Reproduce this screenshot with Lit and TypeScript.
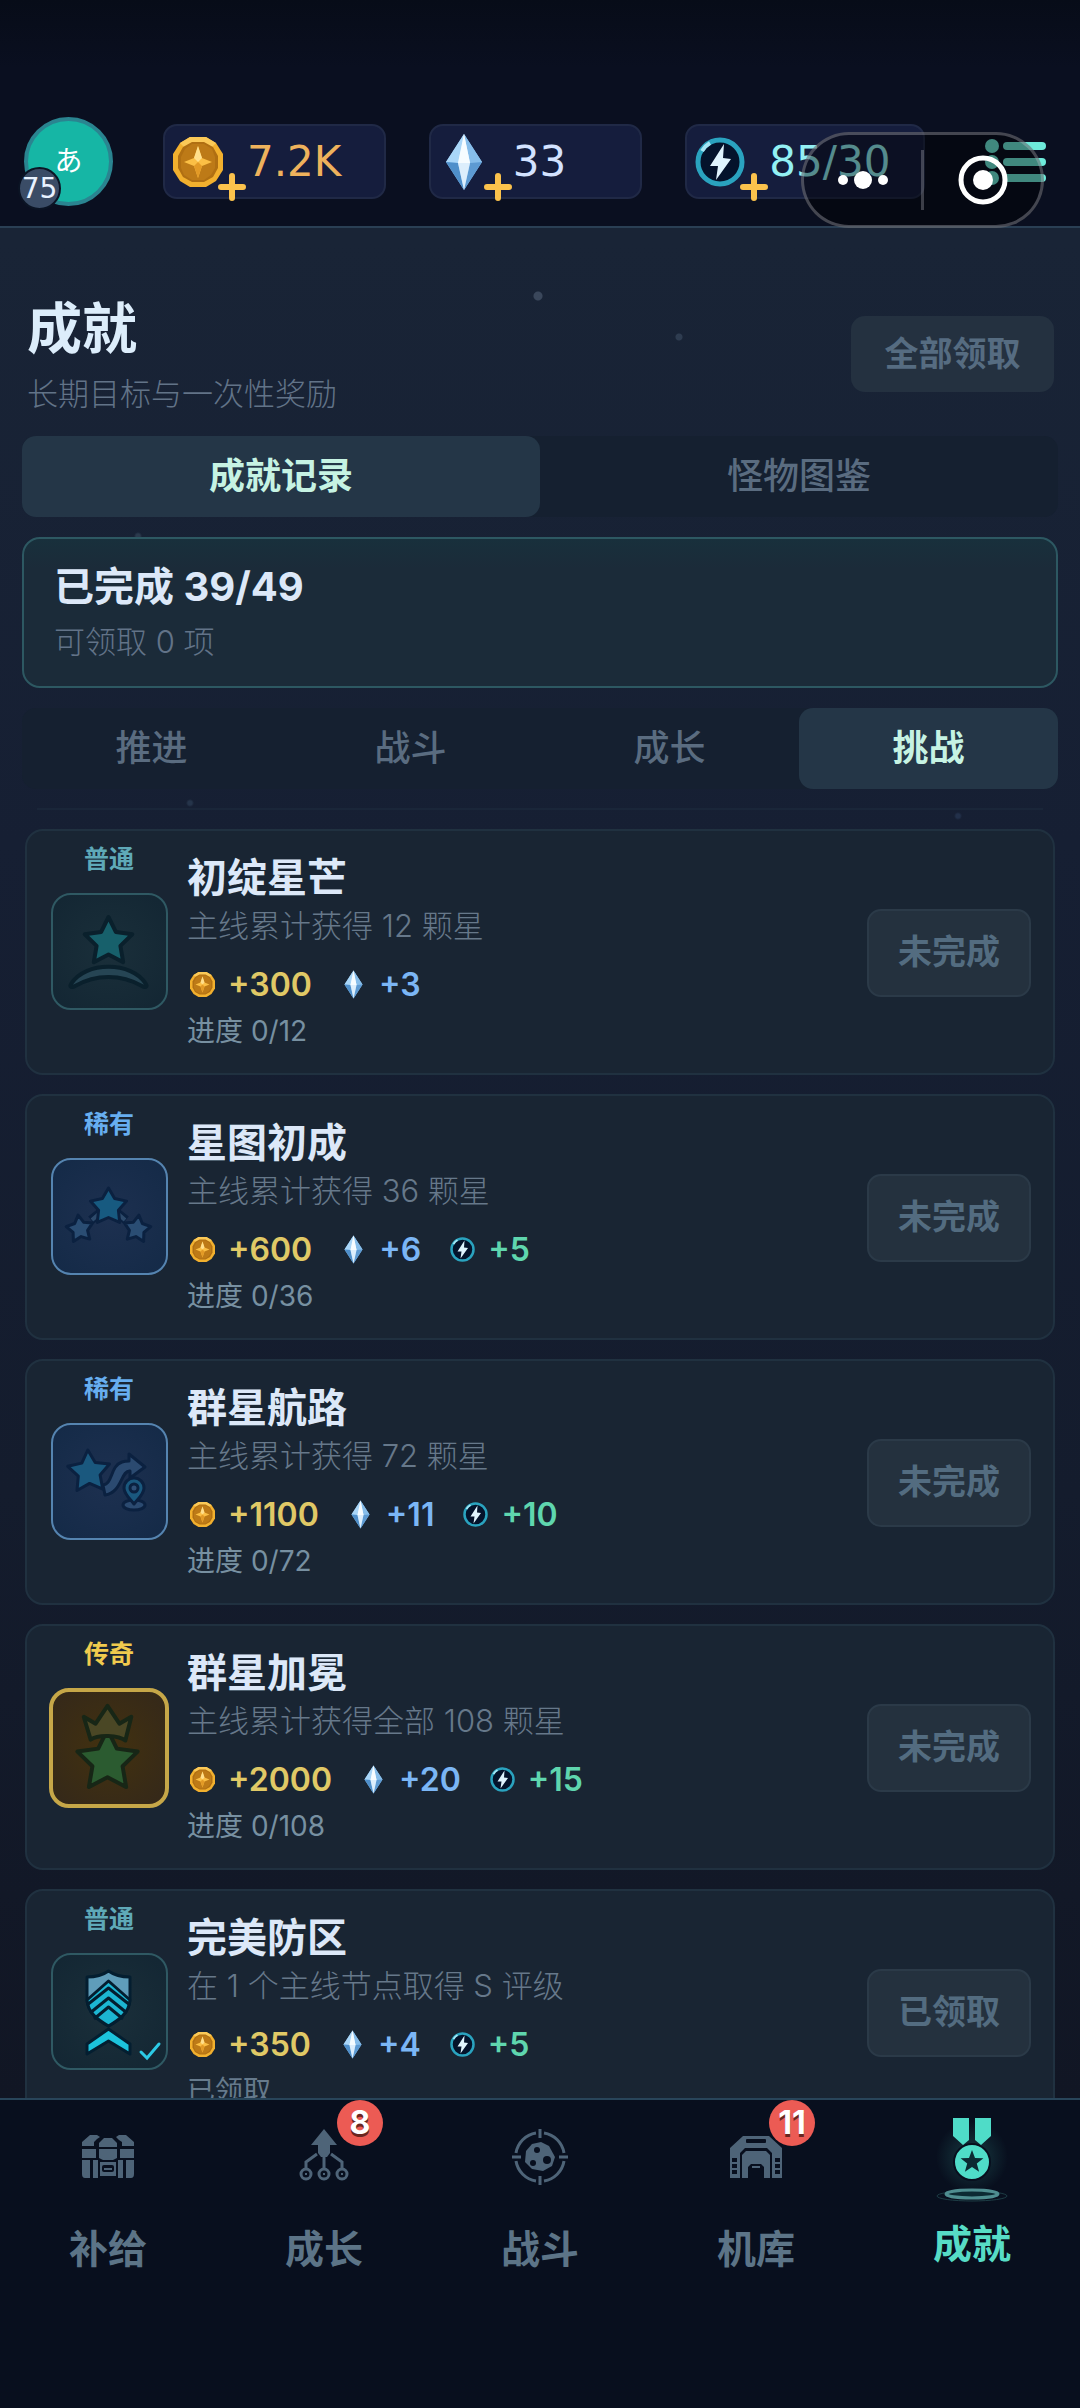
import { LitElement, html, svg, css, nothing } from "lit";
import { customElement, property, state } from "lit/decorators.js";
import { classMap } from "lit/directives/class-map.js";

type Rarity = "common" | "rare" | "legend";

interface Achievement {
  id: string;
  rarity: Rarity;
  title: string;
  desc: string;
  gold: number;
  gem: number;
  energy?: number;
  progress: string;
  claimed?: boolean;
}

const RARITY_LABEL: Record<Rarity, string> = {
  common: "普通",
  rare: "稀有",
  legend: "传奇",
};

const ACHIEVEMENTS: Achievement[] = [
  {
    id: "first-star",
    rarity: "common",
    title: "初绽星芒",
    desc: "主线累计获得 12 颗星",
    gold: 300,
    gem: 3,
    progress: "进度 0/12",
  },
  {
    id: "star-map",
    rarity: "rare",
    title: "星图初成",
    desc: "主线累计获得 36 颗星",
    gold: 600,
    gem: 6,
    energy: 5,
    progress: "进度 0/36",
  },
  {
    id: "star-route",
    rarity: "rare",
    title: "群星航路",
    desc: "主线累计获得 72 颗星",
    gold: 1100,
    gem: 11,
    energy: 10,
    progress: "进度 0/72",
  },
  {
    id: "star-crown",
    rarity: "legend",
    title: "群星加冕",
    desc: "主线累计获得全部 108 颗星",
    gold: 2000,
    gem: 20,
    energy: 15,
    progress: "进度 0/108",
  },
  {
    id: "perfect-defense",
    rarity: "common",
    title: "完美防区",
    desc: "在 1 个主线节点取得 S 评级",
    gold: 350,
    gem: 4,
    energy: 5,
    progress: "已领取",
    claimed: true,
  },
];

// five-pointed star, as a points list
function star(cx: number, cy: number, r: number, inner = 0.5, turn = 0) {
  const pts: string[] = [];
  for (let i = 0; i < 10; i++) {
    const a = ((i * 36 - 90 + turn) * Math.PI) / 180;
    const d = i % 2 ? r * inner : r;
    pts.push(`${(cx + d * Math.cos(a)).toFixed(1)},${(cy + d * Math.sin(a)).toFixed(1)}`);
  }
  return pts.join(" ");
}

const coinIcon = html`<svg viewBox="0 0 50 50" aria-hidden="true">
  <polygon points="17,0 33,0 43,6 50,17 50,33 43,44 33,50 17,50 7,44 0,33 0,17 7,6" fill="#f2b02e" />
  <polygon points="17,0 33,0 43,6 38,11 31,6 19,6 12,11 7,6" fill="#fbc957" />
  <polygon points="19,5 31,5 40,10 45,19 45,31 40,40 31,45 19,45 10,40 5,31 5,19 10,10" fill="#b06f12" />
  <polygon points="19,7 31,7 39,12 42,20 42,31 38,38 31,43 19,43 11,38 8,31 8,20 12,12" fill="#bd7a17" />
  <polygon points="25,9 29,21 39,25 29,29 25,41 21,29 11,25 21,21" fill="#fbbf45" />
  <polygon points="25,9 29,21 25,25 21,21" fill="#ffdf8c" />
  <polygon points="25,41 21,29 25,25 29,29" fill="#e39a26" />
</svg>`;

const gemIcon = html`<svg viewBox="0 0 50 50" aria-hidden="true">
  <polygon points="25,-3 43,25 25,53 7,25" fill="#8ec4f0" />
  <polygon points="25,-3 7,25 19,26" fill="#a9d6f8" />
  <polygon points="25,-3 43,25 31,26" fill="#86bdea" />
  <polygon points="7,25 19,26 25,53" fill="#4f8fca" />
  <polygon points="43,25 31,26 25,53" fill="#5d9ad2" />
  <polygon points="25,-3 31,26 25,53 19,26" fill="#dceefc" />
  <polygon points="25,-3 31,26 19,26" fill="#f6fcff" />
</svg>`;

const energyIcon = html`<svg viewBox="0 0 50 50" aria-hidden="true">
  <circle cx="25" cy="25" r="22" fill="#04132b" stroke="#2aa3bf" stroke-width="5" />
  <path d="M7 14A22 22 0 0 1 15 6" fill="none" stroke="#a5e6f5" stroke-width="4" />
  <polygon points="29,7 15,29 23,29 21,43 36,22 28,21" fill="#dff4fd" />
</svg>`;

const achievementArt: Record<string, unknown> = {
  "first-star": svg`
    <g fill="#17606b" stroke="#0a202c" stroke-width="4" stroke-linejoin="round">
      <path d="M18 89C32 66 79 66 93 89C95 92 92 93 89 91C68 79 43 79 22 91C19 93 16 92 18 89Z" fill="#264554" />
      <polygon points=${star(55.5, 47, 25, 0.5)} />
    </g>`,
  "star-map": svg`
    <g stroke="#0b2140" stroke-width="3" stroke-linejoin="round">
      <path d="M38 60L48 52M73 60L63 52" stroke-width="9" />
      <path d="M39 60L47 53M72 60L64 53" stroke="#2d4a6b" stroke-width="4" />
      <polygon points=${star(55.5, 47, 19, 0.55)} fill="#175a80" />
      <polygon points=${star(27, 69, 14, 0.55, -8)} fill="#2a4d73" />
      <polygon points=${star(84, 69, 14, 0.55, 8)} fill="#2a4d73" />
    </g>`,
  "star-route": svg`
    <g stroke="#0b2140" stroke-width="3" stroke-linejoin="round">
      <path d="M50 60C60 59 57 41 69 37C72 36 74 36 76 36L76 29L92 42L77 53L77 46C68 45 69 68 52 70Z" fill="#2b4a70" />
      <polygon points=${star(36, 47, 22, 0.52, -3)} fill="#1a587e" />
      <ellipse cx="81" cy="80" rx="11" ry="5" fill="#2b4a70" />
      <path d="M81 79C77 74 71 69 71 63A10 10 0 0 1 91 63C91 69 85 74 81 79Z" fill="#1a587e" />
      <circle cx="81" cy="63" r="4" fill="#2f4f76" />
    </g>`,
  "star-crown": svg`
    <g stroke="#172616" stroke-width="4" stroke-linejoin="round">
      <polygon points=${star(55, 70, 32, 0.5)} fill="#2b5b30" />
      <path d="M31 25L43 32L55 14L67 32L79 25L73 49C66 43 45 43 38 48Z" fill="#4a4725" />
    </g>`,
  "perfect-defense": svg`
    <g stroke="#041e30" stroke-width="3" stroke-linejoin="round">
      <path d="M55.5 16C61 20 69 22 77 22L77 43C77 57 66 65 55.5 71C45 65 34 57 34 43L34 22C42 22 50 20 55.5 16Z" fill="#5f9dba" />
      <path d="M55.5 26L77 45C76 58 66 65 55.5 71C45 65 35 58 34 45Z" fill="#1cb6d3" />
      <path d="M34 50L55.5 33L77 50M37 58L55.5 43L74 58M41 64L55.5 52L70 64" fill="none" />
      <path d="M55.5 74L77 89L77 99L55.5 86L34 99L34 89Z" fill="#1cc3dc" />
    </g>
    <path d="M88 97L94 103L106 89" fill="none" stroke="#2ccbe6" stroke-width="3" stroke-linecap="round" />`,
};

const navArt: Record<string, unknown> = {
  supply: svg`
    <g fill="#4e6478" transform="translate(10 15)">
      <path d="M4 19V15L12 8H19L22 10L19 12L16 15V19ZM56 19V15L48 8H41L38 10L41 13L44 15V19Z" />
      <path d="M21 20V16L26 11H34L39 16V20Z" />
      <path d="M4 22H18V31H4ZM42 22H56V31H42ZM21 22H39V31L35 33H25L21 31Z" />
      <path d="M4 33H12V51H7Q4 51 4 47ZM15 33H20V51H15ZM40 33H45V51H40ZM48 33H56V47Q56 51 53 51H48Z" />
      <path d="M22 35H38V49H22Z" />
      <rect x="24" y="38" width="12" height="7" rx="2" fill="#080f1e" />
      <path d="M26 41H34V43H26Z" />
    </g>`,
  growth: svg`
    <g fill="#4e6478" transform="translate(10 15)">
      <path d="M30 2L43 18H36V26L33 30H27L24 26V18H17Z" />
      <g fill="none" stroke="#4e6478" stroke-width="3">
        <path d="M30 28V42M23 27L12 35V42M37 27L48 35V42" />
        <circle cx="12" cy="47" r="5" />
        <circle cx="30" cy="47" r="5" />
        <circle cx="48" cy="47" r="5" />
      </g>
      <path d="M11 46h2v2h-2zM29 46h2v2h-2zM47 46h2v2h-2z" />
    </g>`,
  battle: svg`
    <g fill="none" stroke="#4e6478" stroke-width="3" transform="translate(10 15)">
      <path d="M34 6A24 24 0 0 1 54 26M54 34A24 24 0 0 1 34 54M26 54A24 24 0 0 1 6 34M6 26A24 24 0 0 1 26 6" />
      <path d="M30 2V11M30 49V58M2 30H11M49 30H58" />
      <path d="M22 17L31 15L39 19L45 30L42 39L33 44L22 42L15 35L16 24Z" fill="#4e6478" stroke="none" />
      <g fill="#080f1e" stroke="none">
        <circle cx="27" cy="23" r="3" />
        <circle cx="23" cy="36" r="3" />
        <circle cx="37" cy="33" r="4" />
      </g>
    </g>`,
  hangar: svg`
    <g fill="#4e6478" transform="translate(10 15)">
      <path d="M4 51V21L17 9H43L56 21V51H46V26L41 21H19L14 26V51Z" />
      <path d="M16 51V28L20 24H40L44 28V51H38V40L35 37H25L22 40V51Z" />
      <rect x="26" y="39" width="8" height="2" />
      <g fill="#080f1e">
        <rect x="20" y="12" width="20" height="4" rx="1" />
        <path d="M6 31h5v4h-5zM6 37h5v4h-5zM6 43h5v4h-5zM49 31h5v4h-5zM49 37h5v4h-5zM49 43h5v4h-5z" />
      </g>
    </g>`,
  achievement: svg`
    <defs>
      <radialGradient id="halo">
        <stop offset="0" stop-color="#4fdcc8" stop-opacity="0.22" />
        <stop offset="1" stop-color="#4fdcc8" stop-opacity="0" />
      </radialGradient>
    </defs>
    <circle cx="40" cy="45" r="36" fill="url(#halo)" />
    <g fill="#4fdcc8">
      <path d="M21 6H37V28L31 33L21 24ZM43 6H59V24L49 33L43 28Z" />
      <circle cx="40" cy="50" r="18" stroke="#080f1e" stroke-width="2" />
    </g>
    <polygon points=${star(40, 50, 12, 0.42)} fill="#0c2a33" />
    <ellipse cx="40" cy="84" rx="35" ry="5" fill="none" stroke="#1d3d45" stroke-width="1" />
    <ellipse cx="40" cy="82" rx="26" ry="4" fill="#0c2a33" stroke="#4f8d90" stroke-width="3" />`,
};

const NAV = [
  { id: "supply", label: "补给" },
  { id: "growth", label: "成长", badge: 8 },
  { id: "battle", label: "战斗" },
  { id: "hangar", label: "机库", badge: 11 },
  { id: "achievement", label: "成就" },
];

@customElement("achievement-card")
export class AchievementCard extends LitElement {
  @property({ attribute: false }) item!: Achievement;

  static styles = css`
    :host {
      display: flex;
      flex: none;
      box-sizing: border-box;
      height: 246px;
      padding: 14px 22px 0;
      border: 2px solid #203140;
      border-radius: 18px;
      background: #192533;
    }
    .side {
      flex: none;
      width: 120px;
      display: flex;
      flex-direction: column;
      align-items: center;
      gap: 20px;
    }
    .rarity {
      font-size: 25px;
      line-height: 28px;
      font-weight: 700;
      color: #5fa9b8;
    }
    .rare .rarity {
      color: #67aef0;
    }
    .legend .rarity {
      color: #f0cb4e;
    }
    .icon {
      box-sizing: border-box;
      width: 117px;
      height: 117px;
      border: 2px solid #2f5963;
      border-radius: 20px;
      background: radial-gradient(#1a2f3a, #132633);
    }
    .rare .icon {
      border-color: #5584b0;
      background: radial-gradient(#1d3050, #142a47);
    }
    .legend .icon {
      width: 120px;
      height: 120px;
      border: 4px solid #c6a748;
      background: radial-gradient(#42310f, #34281a);
    }
    .icon svg {
      display: block;
      width: 100%;
      height: 100%;
    }
    .info {
      flex: 1;
      min-width: 0;
      padding: 7px 0 0 18px;
    }
    h2 {
      margin: 0;
      font-size: 40px;
      line-height: 52px;
      font-weight: 700;
      color: #dce8f8;
    }
    .info p {
      margin: 0;
    }
    .desc {
      font-size: 31px;
      line-height: 44px;
      font-weight: 300;
      color: #66788a;
    }
    .rewards {
      display: flex;
      align-items: center;
      gap: 26px;
      margin: 16px 0 8px;
      height: 40px;
      padding: 0;
      list-style: none;
      font-size: 32px;
      font-weight: 600;
    }
    .rewards li {
      display: flex;
      align-items: center;
      gap: 10px;
    }
    .rewards svg {
      width: 25px;
      height: 25px;
      padding: 0 3px;
      overflow: visible;
    }
    .gold {
      color: #e0c966;
    }
    .gem {
      color: #7bb6f5;
    }
    .energy {
      color: #5fd6ae;
    }
    .progress {
      font-size: 28px;
      line-height: 38px;
      color: #7790a1;
    }
    .claimed {
      color: #667a8c;
    }
    button {
      flex: none;
      align-self: flex-start;
      margin-top: 64px;
      width: 164px;
      height: 88px;
      padding: 0 0 8px;
      border: 2px solid #2b3a48;
      border-radius: 14px;
      background: #24313e;
      color: #536c80;
      font: inherit;
      font-size: 34px;
      font-weight: 700;
    }
  `;

  render() {
    const { item } = this;
    return html`
      <div class="side ${item.rarity}">
        <span class="rarity">${RARITY_LABEL[item.rarity]}</span>
        <div class="icon">
          <svg viewBox="0 0 113 113" aria-hidden="true">${achievementArt[item.id]}</svg>
        </div>
      </div>
      <div class="info">
        <h2>${item.title}</h2>
        <p class="desc">${item.desc}</p>
        <ul class="rewards">
          <li class="gold">${coinIcon}<span>+${item.gold}</span></li>
          <li class="gem">${gemIcon}<span>+${item.gem}</span></li>
          ${item.energy
            ? html`<li class="energy">${energyIcon}<span>+${item.energy}</span></li>`
            : nothing}
        </ul>
        <p class="progress ${item.claimed ? "claimed" : ""}">${item.progress}</p>
      </div>
      <button type="button" disabled>${item.claimed ? "已领取" : "未完成"}</button>
    `;
  }
}

@customElement("app-root")
export class AppRoot extends LitElement {
  @state() private view = "成就记录";
  @state() private category = "挑战";

  static styles = css`
    :host {
      display: flex;
      flex-direction: column;
      height: 100vh;
      overflow: hidden;
      font-family: Inter, "Noto Sans CJK SC", sans-serif;
      color: #dce8f8;
      background:
        radial-gradient(circle at 538px 296px, #3a475b 4px, transparent 5px),
        radial-gradient(circle at 679px 337px, #2e3c50 3px, transparent 4px),
        radial-gradient(circle at 138px 536px, #2b3a4d 2px, transparent 4px),
        radial-gradient(circle at 190px 803px, #25344a 2px, transparent 4px),
        radial-gradient(circle at 958px 816px, #22304a 2px, transparent 4px),
        linear-gradient(#192436 10%, #161f33 35%, #141c2d 62%, #111624 87%);
    }
    button {
      font: inherit;
      border: 0;
    }

    /* top bar */
    header {
      display: grid;
      grid-template-columns: 89px 1fr 62px;
      column-gap: 50px;
      align-items: center;
      padding: 117px 33px 20px 24px;
      border-bottom: 2px solid #2a3f54;
      background: linear-gradient(#070c18, #0a0f20 30%);
    }
    .avatar {
      position: relative;
      box-sizing: border-box;
      width: 89px;
      height: 89px;
      padding: 0 0 6px;
      border: 4px solid #2a8490;
      border-radius: 50%;
      background: #16b6a5;
      color: #fff;
      font-family: "Noto Sans CJK JP", sans-serif;
      font-size: 28px;
    }
    .level {
      position: absolute;
      left: -10px;
      bottom: -8px;
      box-sizing: border-box;
      width: 43px;
      height: 43px;
      border: 2px solid #0b1424;
      border-radius: 50%;
      background: #3a4c66;
      color: #e8f2ff;
      font-family: "DejaVu Sans", sans-serif;
      line-height: 39px;
      display: flex;
      justify-content: center;
    }
    .wallet {
      display: grid;
      grid-template-columns: 223fr 214fr 240fr;
      column-gap: 43px;
      margin-right: 10px;
    }
    .chip {
      display: flex;
      align-items: center;
      gap: 24px;
      box-sizing: border-box;
      height: 75px;
      padding: 0 8px;
      border: 2px solid #202946;
      border-radius: 14px;
      background: #151d3d;
      font-family: "DejaVu Sans", sans-serif;
      font-size: 42px;
      white-space: nowrap;
    }
    .chip > .token {
      position: relative;
      flex: none;
      width: 50px;
      height: 50px;
    }
    .token svg {
      display: block;
      overflow: visible;
    }
    .plus {
      position: absolute;
      left: 45px;
      top: 36px;
      width: 28px;
      height: 28px;
      padding: 0;
      background: none;
    }
    .plus svg {
      width: 28px;
      height: 28px;
    }
    .coin {
      color: #eeb25c;
    }
    .gem {
      color: #d3e2ff;
    }
    .energy {
      color: #93f0f3;
    }
    .menu {
      width: 62px;
      height: 48px;
      padding: 0;
      background: none;
    }
    .menu svg {
      display: block;
    }
    .capsule {
      position: absolute;
      top: 132px;
      right: 36px;
      display: flex;
      align-items: center;
      box-sizing: border-box;
      width: 243px;
      height: 96px;
      border: 3px solid rgba(190, 190, 200, 0.34);
      border-radius: 48px;
      background: rgba(0, 0, 0, 0.42);
    }
    .capsule button {
      flex: 1;
      height: 60px;
      padding: 0;
      background: none;
    }
    .capsule button + button {
      border-left: 3px solid rgba(190, 190, 200, 0.3);
    }
    .capsule svg {
      display: block;
      margin: 0 auto;
    }

    /* page */
    main {
      flex: 1;
      min-height: 0;
      display: flex;
      flex-direction: column;
      padding: 64px 22px 0;
    }
    .heading {
      display: flex;
      align-items: center;
      justify-content: space-between;
      padding: 0 4px 0 5px;
    }
    h1,
    .heading p,
    .summary p {
      margin: 0;
    }
    h1 {
      font-size: 55px;
      line-height: 72px;
      font-weight: 700;
      color: #dcedfb;
    }
    .heading p {
      margin-top: 8px;
    }
    .heading p,
    .summary .sub {
      font-size: 31px;
      line-height: 44px;
      font-weight: 300;
      color: #627388;
    }
    .claim-all {
      width: 203px;
      height: 76px;
      padding: 0 0 6px;
      border-radius: 14px;
      background: #243140;
      color: #566c81;
      font-size: 34px;
      font-weight: 700;
    }
    .tabs {
      display: grid;
      grid-auto-flow: column;
      grid-auto-columns: 1fr;
      flex: none;
      margin-top: 20px;
      border-radius: 14px;
      background: #152030;
    }
    .tabs button {
      height: 81px;
      padding: 0 0 8px;
      border-radius: 14px;
      background: none;
      color: #5a6c80;
      font-size: 36px;
      font-weight: 500;
    }
    .tabs .on {
      background: #243647;
      color: #c6f3e3;
      font-weight: 700;
    }
    .summary {
      flex: none;
      box-sizing: border-box;
      margin-top: 20px;
      padding: 20px 30px 22px;
      border: 2px solid #2d5862;
      border-radius: 18px;
      background: linear-gradient(#18303c, #1b2b39 20%);
    }
    .summary .done {
      margin-bottom: 5px;
      font-size: 40px;
      line-height: 56px;
      font-weight: 700;
    }
    .list {
      flex: 1;
      min-height: 0;
      display: flex;
      flex-direction: column;
      gap: 19px;
      margin-top: 19px;
      padding: 0 3px;
      overflow: hidden;
    }
    .list::before {
      content: "";
      flex: none;
      height: 2px;
      margin: 0 12px;
      background: #1a2639;
    }

    /* bottom bar */
    nav {
      flex: none;
      display: grid;
      grid-template-columns: repeat(5, 1fr);
      box-sizing: border-box;
      height: 310px;
      border-top: 2px solid #28455a;
      background: #080f1e;
    }
    nav a {
      position: relative;
      display: flex;
      flex-direction: column;
      align-items: center;
      gap: 19px;
      padding-top: 12px;
      color: #5c7487;
      font-size: 39px;
      line-height: 56px;
      font-weight: 700;
      text-decoration: none;
    }
    nav a.on {
      gap: 14px;
      color: #57dcc6;
    }
    nav svg {
      width: 80px;
      height: 90px;
    }
    .badge {
      position: absolute;
      left: calc(50% + 13px);
      top: 0;
      width: 46px;
      height: 46px;
      border-radius: 50%;
      background: #ec5b54;
      color: #fff;
      font-size: 32px;
      line-height: 46px;
      text-align: center;
      text-shadow: 0 3px 0 #6a2620;
    }
  `;

  private chip(kind: string, icon: unknown, value: string) {
    return html`
      <div class="chip ${kind}">
        <span class="token">
          ${icon}
          <button class="plus" type="button" aria-label="+">
            <svg viewBox="0 0 28 28">
              <path d="M14 3V25M3 14H25" stroke="#fbc24c" stroke-width="6" stroke-linecap="round" />
            </svg>
          </button>
        </span>
        <span>${value}</span>
      </div>
    `;
  }

  private tabs(labels: string[], current: string, pick: (label: string) => void) {
    return html`
      <div class="tabs" role="tablist">
        ${labels.map(
          (label) => html`<button
            type="button"
            role="tab"
            aria-selected=${label === current}
            class=${classMap({ on: label === current })}
            @click=${() => pick(label)}
          >
            ${label}
          </button>`
        )}
      </div>
    `;
  }

  render() {
    return html`
      <header>
        <button class="avatar" type="button">あ<span class="level">75</span></button>
        <div class="wallet">
          ${this.chip("coin", coinIcon, "7.2K")}
          ${this.chip("gem", gemIcon, "33")}
          ${this.chip("energy", energyIcon, "85/30")}
        </div>
        <button class="menu" type="button" aria-label="menu">
          <svg width="62" height="48" viewBox="0 0 62 48" fill="#6eeada">
            <circle cx="7" cy="8" r="7" />
            <circle cx="7" cy="24" r="7" />
            <circle cx="7" cy="40" r="7" />
            <rect x="18" y="4" width="43" height="8" rx="4" />
            <rect x="18" y="20" width="43" height="8" rx="4" />
            <rect x="18" y="36" width="43" height="8" rx="4" />
          </svg>
        </button>
      </header>
      <div class="capsule">
        <button type="button" aria-label="more">
          <svg width="60" height="24" viewBox="0 0 60 24" fill="#fff">
            <circle cx="10" cy="12" r="5" />
            <circle cx="30" cy="12" r="9" />
            <circle cx="50" cy="12" r="5" />
          </svg>
        </button>
        <button type="button" aria-label="close">
          <svg width="52" height="52" viewBox="0 0 52 52">
            <circle cx="26" cy="26" r="22" fill="none" stroke="#fff" stroke-width="5" />
            <circle cx="26" cy="26" r="10" fill="#fff" />
          </svg>
        </button>
      </div>

      <main>
        <div class="heading">
          <div>
            <h1>成就</h1>
            <p>长期目标与一次性奖励</p>
          </div>
          <button class="claim-all" type="button" disabled>全部领取</button>
        </div>
        ${this.tabs(["成就记录", "怪物图鉴"], this.view, (v) => (this.view = v))}
        <section class="summary">
          <p class="done">已完成 39/49</p>
          <p class="sub">可领取 0 项</p>
        </section>
        ${this.tabs(["推进", "战斗", "成长", "挑战"], this.category, (v) => (this.category = v))}
        <section class="list">
          ${ACHIEVEMENTS.map(
            (item) => html`<achievement-card .item=${item}></achievement-card>`
          )}
        </section>
      </main>

      <nav>
        ${NAV.map(
          ({ id, label, badge }) => html`<a href="#${id}" class=${classMap({ on: id === "achievement" })}>
            <svg viewBox="0 0 80 90" aria-hidden="true">${navArt[id]}</svg>
            <span>${label}</span>
            ${badge ? html`<span class="badge">${badge}</span>` : nothing}
          </a>`
        )}
      </nav>
    `;
  }
}
